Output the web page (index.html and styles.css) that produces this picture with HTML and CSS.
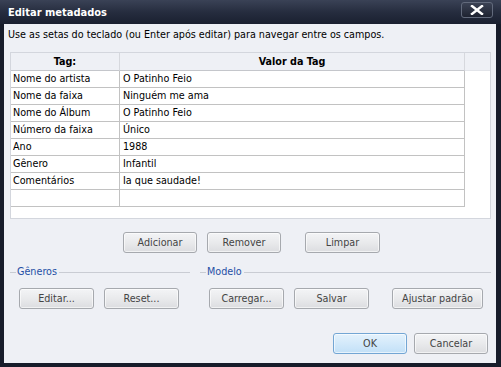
FILE: index.html
```html
<!DOCTYPE html>
<html>
<head>
<meta charset="utf-8">
<link rel="stylesheet" href="styles.css">
</head>
<body>
<div class="window">
  <div class="titlebar">
    <span class="title">Editar metadados</span>
    <div class="close">
      <svg width="14" height="10" viewBox="0 0 14 10"><path d="M2 1 L12 9 M12 1 L2 9" stroke="#fff" stroke-width="2.4" stroke-linecap="square"/></svg>
    </div>
  </div>
  <div class="content">
    <p class="hint">Use as setas do teclado (ou Enter após editar) para navegar entre os campos.</p>
    <div class="table">
      <div class="thead">
        <div class="c1">Tag:</div>
        <div class="c2">Valor da Tag</div>
        <div class="fill"></div>
      </div>
      <div class="row"><div class="c1">Nome do artista</div><div class="c2">O Patinho Feio</div></div>
      <div class="row"><div class="c1">Nome da faixa</div><div class="c2">Ninguém me ama</div></div>
      <div class="row"><div class="c1">Nome do Álbum</div><div class="c2">O Patinho Feio</div></div>
      <div class="row"><div class="c1">Número da faixa</div><div class="c2">Único</div></div>
      <div class="row"><div class="c1">Ano</div><div class="c2">1988</div></div>
      <div class="row"><div class="c1">Gênero</div><div class="c2">Infantil</div></div>
      <div class="row"><div class="c1">Comentários</div><div class="c2">Ia que saudade!</div></div>
      <div class="row"><div class="c1"></div><div class="c2"></div></div>
    </div>
    <div class="btnrow r1">
      <button class="btn b-add">Adicionar</button>
      <button class="btn b-rem">Remover</button>
      <button class="btn b-clr">Limpar</button>
    </div>
    <div class="groups">
      <div class="group g1"><span class="seg"></span><span class="glabel">Gêneros</span><span class="seg grow"></span></div>
      <div class="group g2"><span class="seg"></span><span class="glabel">Modelo</span><span class="seg grow"></span></div>
    </div>
    <div class="btnrow r2">
      <button class="btn b-edit">Editar...</button>
      <button class="btn b-reset">Reset...</button>
      <button class="btn b-load">Carregar...</button>
      <button class="btn b-save">Salvar</button>
      <button class="btn b-def">Ajustar padrão</button>
    </div>
    <div class="btnrow r3">
      <button class="btn ok b-ok">OK</button>
      <button class="btn b-cancel">Cancelar</button>
    </div>
  </div>
</div>
</body>
</html>
```
FILE: styles.css
```css
html, body {
  margin: 0;
  padding: 0;
}
body {
  width: 501px;
  height: 367px;
  overflow: hidden;
  font-family: "DejaVu Sans Condensed", "DejaVu Sans", sans-serif;
  font-size: 10.7px;
}
.window {
  width: 501px;
  height: 367px;
  box-sizing: border-box;
  background: #171c2a;
  display: flex;
  flex-direction: column;
}
.titlebar {
  height: 24px;
  flex: none;
  display: flex;
  align-items: center;
  justify-content: space-between;
  padding: 0 8px 0 8px;
  background: linear-gradient(#3a4256 0%, #262d3f 50%, #1a2030 100%);
}
.title {
  color: #fff;
  font-weight: bold;
  font-size: 11px;
  margin-top: 1px;
}
.close {
  width: 30px;
  height: 14px;
  margin-top: -5px;
  border: 1px solid #626a7c;
  border-radius: 3px;
  background: linear-gradient(#3b4254, #1e2331);
  display: flex;
  align-items: center;
  justify-content: center;
}
.content {
  flex: 1;
  margin: 0 5px 4px 4px;
  background: #eef0f5;
  display: flex;
  flex-direction: column;
}
.hint {
  margin: 0;
  height: 28px;
  box-sizing: border-box;
  padding: 3px 0 0 4px;
  line-height: 16px;
  color: #000;
}
.table {
  margin: 0 5px 0 6px;
  height: 167px;
  box-sizing: border-box;
  border: 1px solid #d3d6dd;
  background: #fff;
  display: flex;
  flex-direction: column;
}
.thead {
  display: flex;
  height: 18px;
  box-sizing: border-box;
  background: #eef0f5;
}
.thead .c1, .thead .c2 {
  font-weight: bold;
  text-align: center;
  border-bottom: 1px solid #c4c6cb;
  border-right: 1px solid #d6d8dd;
  line-height: 17px;
}
.thead .fill {
  flex: 1;
  border-bottom: 1px solid #e2e4e9;
}
.c1 {
  width: 108px;
  flex: none;
  border-right: 1px solid #c2c2c2;
}
.c2 {
  width: 344px;
  flex: none;
  border-right: 1px solid #c2c2c2;
}
.row {
  display: flex;
  width: 454px;
  height: 17px;
  box-sizing: border-box;
  border-bottom: 1px solid #c2c2c2;
}
.row .c1, .row .c2 {
  line-height: 16px;
  padding-left: 2px;
  box-sizing: border-box;
  width: 109px;
  white-space: nowrap;
}
.row .c2 {
  width: 345px;
  padding-left: 3px;
}
.btnrow {
  display: flex;
  flex: none;
}
.btn {
  font-family: inherit;
  font-size: 10.7px;
  color: #444;
  height: 21px;
  box-sizing: border-box;
  width: 74px;
  padding: 0;
  border: 1px solid #a6a9ae;
  border-radius: 3px;
  background: linear-gradient(#f3f4f6 0%, #e9eaec 50%, #dcdde0 100%);
  box-shadow: inset 0 0 0 1px rgba(255,255,255,0.6);
}
.btn.ok {
  border-color: #73a6d4;
  background: linear-gradient(#e4f2fc 0%, #d3e9fa 50%, #c2e0f7 100%);
}
.r1 { margin-top: 13px; }
.b-add { margin-left: 119px; }
.b-rem { margin-left: 10px; }
.b-clr { margin-left: 24px; width: 75px; }
.groups {
  display: flex;
  margin-top: 11px;
  height: 16px;
}
.group {
  display: flex;
  align-items: center;
}
.g1 { margin-left: 6px; width: 180px; }
.g2 { margin-left: 10px; width: 291px; }
.seg {
  width: 6px;
  height: 1px;
  background: #c9ccd3;
}
.seg.grow { flex: 1; }
.glabel {
  color: #1f4fa5;
  padding: 0 2px 0 1px;
  line-height: 16px;
}
.r2 { margin-top: 8px; }
.r2 .btn { width: 75px; }
.b-edit { margin-left: 15px; }
.b-reset { margin-left: 10px; }
.b-load { margin-left: 30px; }
.b-save { margin-left: 10px; }
.r2 .b-def { margin-left: 23px; width: 91px; }
.r3 { margin-top: 24px; }
.b-ok { margin-left: 329px; }
.b-cancel { margin-left: 7px; }
```
